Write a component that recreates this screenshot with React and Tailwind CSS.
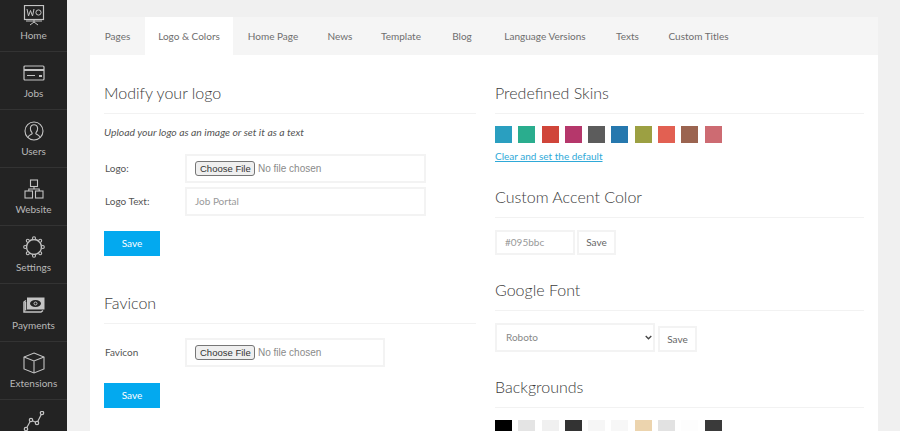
import React from "react";

const font = "font-['Lato','Noto_Sans',sans-serif]";

const HomeIcon = () => (
  <svg width="22" height="21" viewBox="0 0 22 21" fill="none" stroke="currentColor" strokeWidth="1">
    <rect x="1.500" y="0.500" width="19" height="14" strokeWidth="1.200" />
    <path d="M4 4l1.500 7 2-5.500 2 5.500 1.500-7" />
    <circle cx="15.500" cy="7.500" r="2.600" />
    <path d="M11 15v2M11 17l-4 3M11 17l4 3M3 16h16" />
  </svg>
);

const JobsIcon = () => (
  <svg width="22" height="16" viewBox="0 0 22 16" fill="none" stroke="currentColor">
    <rect x="1" y="1" width="20" height="14" rx="1" strokeWidth="1.200" />
    <path d="M1 5h20" strokeWidth="2" />
    <path d="M4 10.500h8" />
    <path d="M16 11h3" strokeWidth="2" />
  </svg>
);

const UsersIcon = () => (
  <svg width="20" height="20" viewBox="0 0 20 20" fill="none" stroke="currentColor" strokeWidth="1.100">
    <circle cx="10" cy="10" r="9" />
    <path d="M4.200 16.500c.3-2.500 2-2.600 3.600-3.400.5-.3.5-1.200 0-1.700C6.800 10.300 6.300 8.800 6.400 7.200 6.600 5 8.100 3.800 10 3.800s3.400 1.200 3.600 3.400c.1 1.600-.4 3.100-1.400 4.200-.5.5-.5 1.400 0 1.700 1.600.8 3.300.9 3.600 3.400" />
  </svg>
);

const WebsiteIcon = () => (
  <svg width="20" height="20" viewBox="0 0 20 20" fill="none" stroke="currentColor" strokeWidth="1.100">
    <rect x="6.500" y="1" width="7" height="6.500" />
    <rect x="1" y="12" width="7.500" height="7" />
    <rect x="11.500" y="12" width="7.500" height="7" />
    <path d="M10 7.500v2.500M4.800 12v-2h10.400v2" />
  </svg>
);

const SettingsIcon = () => (
  <svg width="22" height="22" viewBox="0 0 22 22" fill="none" stroke="currentColor" strokeWidth="1.100">
    <circle cx="11" cy="11" r="7.500" strokeWidth="1.300" />
    <g fill="#232323">
      <circle cx="11" cy="2.200" r="1.500" />
      <circle cx="11" cy="19.800" r="1.500" />
      <circle cx="2.200" cy="11" r="1.500" />
      <circle cx="19.800" cy="11" r="1.500" />
      <circle cx="4.800" cy="4.800" r="1.500" />
      <circle cx="17.200" cy="4.800" r="1.500" />
      <circle cx="4.800" cy="17.200" r="1.500" />
      <circle cx="17.200" cy="17.200" r="1.500" />
    </g>
  </svg>
);

const PaymentsIcon = () => (
  <svg width="22" height="16" viewBox="0 0 22 16" fill="none" stroke="currentColor">
    <path d="M3 3.500L1 5v10h17l2-1.500" strokeWidth="1.500" />
    <path d="M2.500 5v8.500" strokeWidth="1.500" />
    <rect x="4.500" y="1" width="16.500" height="11" fill="currentColor" />
    <ellipse cx="12.500" cy="6.500" rx="5.500" ry="3.500" fill="#232323" stroke="none" />
    <circle cx="12.500" cy="6.500" r="1.500" strokeWidth="1" />
  </svg>
);

const ExtensionsIcon = () => (
  <svg width="22" height="22" viewBox="0 0 22 22" fill="none" stroke="currentColor" strokeWidth="1.100">
    <path d="M11 1l10 4v12l-10 4-10-4V5z" />
    <path d="M1 5l10 4 10-4M11 9v12" />
  </svg>
);

const ChartIcon = () => (
  <svg width="22" height="20" viewBox="0 0 22 20" fill="none" stroke="currentColor" strokeWidth="1.200">
    <path d="M3 18l5-9 6 3 5-10" />
    <circle cx="3" cy="18" r="1.700" fill="#232323" />
    <circle cx="8" cy="9" r="1.700" fill="#232323" />
    <circle cx="14" cy="12" r="1.700" fill="#232323" />
    <circle cx="19" cy="2" r="1.700" fill="#232323" />
  </svg>
);

// last item is cut off by the window, only its icon shows
const menu = [
  { id: "home", label: "Home", icon: <HomeIcon /> },
  { id: "jobs", label: "Jobs", icon: <JobsIcon /> },
  { id: "users", label: "Users", icon: <UsersIcon /> },
  { id: "website", label: "Website", icon: <WebsiteIcon /> },
  { id: "settings", label: "Settings", icon: <SettingsIcon /> },
  { id: "payments", label: "Payments", icon: <PaymentsIcon /> },
  { id: "extensions", label: "Extensions", icon: <ExtensionsIcon /> },
  { id: "chart", icon: <ChartIcon /> },
];

const tabs = [
  { label: "Pages", w: "w-[55px]" },
  { label: "Logo & Colors", w: "w-[88px]", active: true },
  { label: "Home Page", w: "w-[80px]" },
  { label: "News", w: "w-[54px]" },
  { label: "Template", w: "w-[68px]" },
  { label: "Blog", w: "w-[54px]" },
  { label: "Language Versions", w: "w-[112px]" },
  { label: "Texts", w: "w-[53px]" },
  { label: "Custom Titles", w: "w-[89px]" },
];

const skins = ["#2a9fc0", "#2aad8e", "#d0453a", "#b5376b", "#5c5c5c", "#2678ae", "#9ca042", "#e26052", "#9b6450", "#cd6b72"];
const backgrounds = ["#000000", "#e4e4e4", "#f0f0f0", "#333333", "#f6f6f6", "#f7f7f7", "#ecd4ae", "#e2e2e2", "#fdfdfd", "#3a3a3a"];

const Heading = ({ children, className }) => (
  <div className={`h-[33px] border-b border-[#f2f2f2] text-[16px] leading-[24px] font-light text-[#3c3c3c] ${className}`}>
    {children}
  </div>
);

const SaveButton = () => (
  <button className="block w-14 h-[25px] bg-[#03a9ef] text-white text-[10px]">Save</button>
);

const FileField = ({ className }) => (
  <div className={`h-[29px] border-2 border-[#f3f3f3] pl-[8px] flex items-center ${className}`}>
    <input type="file" className="text-[10px] text-[#8a8a8a] font-['Liberation_Sans',sans-serif] w-[180px] file:text-[9.500px] file:text-[#333] file:bg-[#efefef] file:border file:border-[#767676] file:rounded-[3px] file:px-[4px] file:py-0 file:h-[15px] file:w-[60px] file:mr-[3px]" />
  </div>
);

const Swatches = ({ colors }) => (
  <div className="flex gap-[6.300px]">
    {colors.map((c) => (
      <div key={c} className="w-[17px] h-[17px] shrink-0" style={{ backgroundColor: c }} />
    ))}
  </div>
);

const OutlineSave = ({ className }) => (
  <button className={`w-[39px] border-2 border-[#f3f3f3] text-[10px] text-[#666] ${className}`}>Save</button>
);

export default function App() {
  return (
    <div className={`flex h-[431px] overflow-hidden bg-[#f0f0f0] ${font}`}>
      <aside className="w-[67px] shrink-0 bg-[#232323] -mt-[6px]">
        {menu.map((item) => (
          <div key={item.id} className="h-[58px] border-b border-[#333333] flex flex-col items-center pt-[9px] gap-[2px] text-[#c4c4c4]">
            <div className="h-[24px] flex items-center">{item.icon}</div>
            {item.label && <span className="text-[10px] leading-[13px] text-[#b8b8b8]">{item.label}</span>}
          </div>
        ))}
      </aside>

      <main className="w-[788px] ml-[23px] mt-[17px] bg-white shrink-0">
        <nav className="flex h-[38px] bg-[#f5f5f5] text-[10px] text-[#6e6e6e]">
          {tabs.map((t) => (
            <div key={t.label} className={`${t.w} h-full flex items-center justify-center ${t.active ? "bg-white" : ""}`}>
              {t.label}
            </div>
          ))}
        </nav>

        <div className="flex">
          <section className="w-[405px] pl-[14px] pt-[26px] shrink-0">
            <Heading className="w-[372px]">Modify your logo</Heading>
            <p className="mt-[11px] text-[10.400px] leading-[14px] italic text-[#555]">Upload your logo as an image or set it as a text</p>

            <div className="mt-[15px] flex items-center">
              <label className="w-[81px] pl-[1px] text-[10px] text-[#555]">Logo:</label>
              <FileField className="w-[241px]" />
            </div>
            <div className="mt-[4px] flex items-center">
              <label className="w-[81px] pl-[1px] text-[10px] text-[#555]">Logo Text:</label>
              <div className="w-[241px] h-[29px] border-2 border-[#f3f3f3] pl-[8px] flex items-center text-[10px] text-[#999]">Job Portal</div>
            </div>
            <div className="mt-[15px]"><SaveButton /></div>

            <Heading className="w-[372px] mt-[35px]">Favicon</Heading>
            <div className="mt-[14px] flex items-center">
              <label className="w-[81px] pl-[1px] text-[10px] text-[#555]">Favicon</label>
              <FileField className="w-[200px]" />
            </div>
            <div className="mt-[16px]"><SaveButton /></div>
          </section>

          <section className="w-[369px] pt-[26px] shrink-0">
            <Heading>Predefined Skins</Heading>
            <div className="mt-[12px]"><Swatches colors={skins} /></div>
            <a className="block mt-[6px] text-[10px] leading-[14px] text-[#2fa9d8] underline">Clear and set the default</a>

            <Heading className="mt-[22px]">Custom Accent Color</Heading>
            <div className="mt-[12px] flex gap-[2px]">
              <div className="w-[80px] h-[25px] border-2 border-[#f3f3f3] pl-[8px] flex items-center text-[10px] text-[#999]">#095bbc</div>
              <OutlineSave className="h-[25px]" />
            </div>

            <Heading className="mt-[23px]">Google Font</Heading>
            <div className="mt-[12px] flex items-end gap-[3px]">
              <div className="relative w-[160px] h-[29px]">
                <select className="appearance-none w-full h-full border-2 border-[#f3f3f3] bg-white pl-[9px] text-[10px] text-[#888]">
                  <option>Roboto</option>
                </select>
                <svg className="absolute right-[3px] top-[12px] pointer-events-none" width="7" height="5" viewBox="0 0 7 5" fill="none" stroke="#444" strokeWidth="1.300">
                  <path d="M.7 1l2.800 2.800L6.300 1" />
                </svg>
              </div>
              <OutlineSave className="h-[26px]" />
            </div>

            <Heading className="mt-[23px]">Backgrounds</Heading>
            <div className="mt-[12px]"><Swatches colors={backgrounds} /></div>
          </section>
        </div>
      </main>
    </div>
  );
}
